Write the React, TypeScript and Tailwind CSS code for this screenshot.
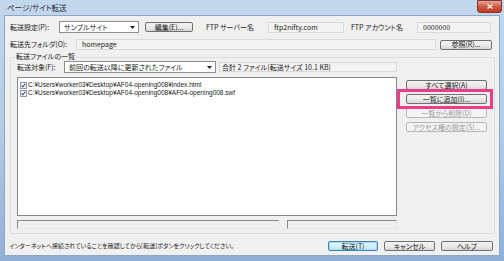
import React from 'react';

const jp = "font-['Noto_Sans_CJK_JP',sans-serif] [font-feature-settings:'palt'] text-[7px] leading-none text-[#1a1a1a]";

const Btn: React.FC<{ label: string; w: string; disabled?: boolean; focused?: boolean }> = ({ label, w, disabled, focused }) => (
    <div
        className={`${w} h-[10px] flex items-center justify-center rounded-[2px] border ${
            disabled
                ? 'border-[#b5b9bc] bg-[#f4f4f4] text-[#9a9a9a]'
                : focused
                ? 'border-[#3c7fb1] bg-gradient-to-b from-[#eaf6fd] to-[#bee6fd] shadow-[inset_0_0_0_1px_#a6e0fb]'
                : 'border-[#707070] bg-gradient-to-b from-[#f2f2f2] via-[#ebebeb] to-[#d6d6d6]'
        }`}
    >
        <span className={`${jp} ${disabled ? 'text-[#9a9a9a]' : ''}`}>{label}</span>
    </div>
);

const ReadField: React.FC<{ w: string; text?: string }> = ({ w, text }) => (
    <div className={`${w} h-[11px] flex items-center px-[5px] border border-[#dadada] bg-[#f3f3f3]`}>
        <span className={jp}>{text}</span>
    </div>
);

const Select: React.FC<{ w: string; text: string }> = ({ w, text }) => (
    <div className={`${w} h-[12px] flex items-center justify-between pl-[4px] pr-[3px] border border-[#8e8f8f] bg-white`}>
        <span className={jp}>{text}</span>
        <svg width="5" height="3" viewBox="0 0 5 3">
            <path d="M0 0h5L2.5 3z" fill="#222" />
        </svg>
    </div>
);

const Check: React.FC = () => (
    <svg width="7" height="7" viewBox="0 0 7 7" className="shrink-0">
        <rect x="0.5" y="0.5" width="6" height="6" fill="#f4f6fa" stroke="#8f9aa6" />
        <path d="M1.6 3.4l1.3 1.5 2.4-3.3" fill="none" stroke="#3a5fa8" strokeWidth="1.1" />
    </svg>
);

const ListItem: React.FC<{ path: string }> = ({ path }) => (
    <div className="flex items-center gap-[1px] h-[8px] pl-[2px]">
        <Check />
        <span className="font-['Liberation_Sans',sans-serif] text-[6.5px] leading-none text-[#1a1a1a]">{path}</span>
    </div>
);

const Sunken: React.FC<{ w: string }> = ({ w }) => (
    <div className={`${w} h-[9px] border-t border-l border-t-[#8a8a8a] border-l-[#8a8a8a] border-b border-r border-b-[#e8e8e8] border-r-[#e8e8e8]`} />
);

export default function App() {
    return (
        <div className="w-[504px] h-[261px] flex flex-col bg-gradient-to-b from-[#c3d7ed] via-[#b4cbe6] to-[#8fb0d6] overflow-hidden">
            {/* title bar */}
            <div className="h-[15px] shrink-0 flex items-center justify-between pl-[7px] pr-[2px]">
                <span className="font-['Noto_Sans_CJK_JP',sans-serif] [font-feature-settings:'palt'] text-[7.5px] leading-none text-[#1e2a3a]">ページ/サイト転送</span>
                <div className="w-[25px] h-[13px] mt-[-2px] rounded-b-[3px] border border-[#7a3a30] bg-gradient-to-b from-[#e8a598] via-[#cf5a44] to-[#c2381f] flex items-center justify-center">
                    <svg width="6" height="5" viewBox="0 0 6 5">
                        <path d="M0.5 0.5l5 4M5.5 0.5l-5 4" stroke="white" strokeWidth="1.3" />
                    </svg>
                </div>
            </div>

            {/* client */}
            <div className="flex-1 mx-[4px] mb-[5px] bg-[#f0f0f0] border border-[#8ca6c6] flex flex-col pl-[5px] pr-[4px]">
                {/* row 1 */}
                <div className="flex items-center mt-[5px] h-[12px]">
                    <span className={`${jp} w-[49px]`}>転送設定(P):</span>
                    <Select w="w-[80px]" text="サンプルサイト" />
                    <div className="ml-[6px]">
                        <Btn label="編集(E)..." w="w-[48px]" />
                    </div>
                    <span className={`${jp} ml-[13px] w-[62px]`}>FTP サーバー名</span>
                    <ReadField w="w-[76px]" text="ftp2nifty.com" />
                    <span className={`${jp} ml-[7px] w-[66px]`}>FTP アカウント名</span>
                    <ReadField w="w-[74px]" text="0000000" />
                </div>

                {/* row 2 */}
                <div className="flex items-center mt-[6px] h-[11px]">
                    <span className={`${jp} w-[66px]`}>転送先フォルダ(O):</span>
                    <ReadField w="w-[360px]" text="homepage" />
                    <div className="ml-[4px]">
                        <Btn label="参照(R)..." w="w-[52px]" />
                    </div>
                </div>

                {/* group box */}
                <div className="relative mt-[7px] h-[177px] w-[485px] border border-[#d5dfe5] rounded-[2px] flex flex-col pl-[6px]">
                    <span className={`${jp} absolute left-[4px] top-[-5px] bg-[#f0f0f0] px-[1px]`}>転送ファイルの一覧</span>

                    <div className="flex items-center mt-[3px] h-[12px]">
                        <span className={`${jp} w-[47px]`}>転送対象(F):</span>
                        <Select w="w-[152px]" text="前回の転送以降に更新されたファイル" />
                        <div className="ml-[3px] w-[178px] h-[10px] flex items-center pl-[2px] border border-[#dadada] bg-[#f3f3f3]">
                            <span className={jp}>合計 2 ファイル(転送サイズ 10.1 KB)</span>
                        </div>
                    </div>

                    <div className="flex mt-[4px]">
                        <div className="w-[380px] h-[139px] bg-white border border-[#828790] pt-[3px]">
                            <ListItem path="C:¥Users¥worker03¥Desktop¥AF04-opening008¥index.html" />
                            <ListItem path="C:¥Users¥worker03¥Desktop¥AF04-opening008¥AF04-opening008.swf" />
                        </div>
                        <div className="ml-[9px] mt-[3px] flex flex-col gap-[4px]">
                            <Btn label="すべて選択(A)" w="w-[81px]" />
                            <div className="relative">
                                <Btn label="一覧に追加(I)..." w="w-[81px]" />
                                <div className="absolute left-[-9px] right-[-6px] top-[-5px] bottom-[-5px] border-[3px] border-[#ee3d88]" />
                            </div>
                            <Btn label="一覧から削除(D)" w="w-[81px]" disabled />
                            <Btn label="アクセス権の設定(S)..." w="w-[81px]" disabled />
                        </div>
                    </div>

                    <div className="flex mt-[4px] gap-[8px]">
                        <Sunken w="w-[262px]" />
                        <Sunken w="w-[110px]" />
                    </div>
                </div>

                {/* bottom row */}
                <div className="flex items-center justify-between mt-[7px] pr-[2px]">
                    <span className="font-['Noto_Sans_CJK_JP',sans-serif] [font-feature-settings:'palt'] text-[6px] leading-none text-[#1a1a1a] ml-[-1px]">インターネットへ接続されていることを確認してから[転送]ボタンをクリックしてください。</span>
                    <div className="flex gap-[6px]">
                        <Btn label="転送(T)" w="w-[50px]" focused />
                        <Btn label="キャンセル" w="w-[51px]" />
                        <Btn label="ヘルプ" w="w-[52px]" />
                    </div>
                </div>
            </div>
        </div>
    );
}
